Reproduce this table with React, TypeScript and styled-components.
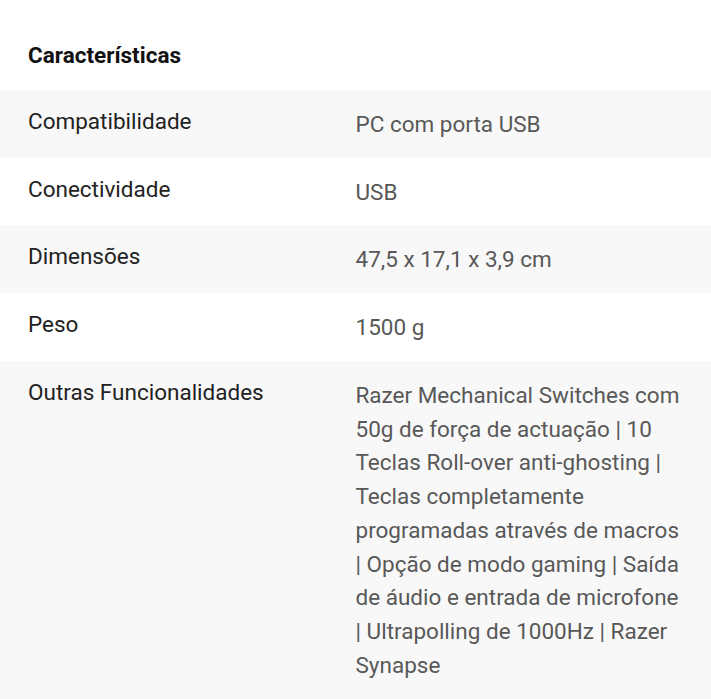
import React from "react";
import styled, { createGlobalStyle } from "styled-components";

const Global = createGlobalStyle`
  html, body { margin: 0; padding: 0; background: #ffffff; }
  body { font-family: Roboto, "Noto Sans", Arial, sans-serif; -webkit-font-smoothing: antialiased; }
`;

const Page = styled.div`
  width: 711px;
  background: #ffffff;
`;

const Title = styled.h2`
  margin: 0;
  padding: 39px 28px 17px;
  font-size: 22.5px;
  line-height: 33.75px;
  font-weight: 700;
  color: #111111;
`;

const Table = styled.div`
  display: flex;
  flex-direction: column;
`;

const Row = styled.div<{ $shaded: boolean }>`
  display: grid;
  grid-template-columns: 1fr 1fr;
  padding: 18px 28px 16px;
  background: ${(p) => (p.$shaded ? "#f8f8f8" : "#ffffff")};
`;

const Label = styled.div`
  font-size: 22.5px;
  line-height: 33.75px;
  color: #222222;
  margin-top: -3px;
`;

const Value = styled.div`
  font-size: 22.5px;
  line-height: 33.75px;
  color: #585858;
`;

const rows: [string, string][] = [
  ["Compatibilidade", "PC com porta USB"],
  ["Conectividade", "USB"],
  ["Dimensões", "47,5 x 17,1 x 3,9 cm"],
  ["Peso", "1500 g"],
  [
    "Outras Funcionalidades",
    "Razer Mechanical Switches com 50g de força de actuação | 10 Teclas Roll-over anti-ghosting | Teclas completamente programadas através de macros | Opção de modo gaming | Saída de áudio e entrada de microfone | Ultrapolling de 1000Hz | Razer Synapse",
  ],
];

export default function App() {
  return (
    <Page>
      <Global />
      <Title>Características</Title>
      <Table>
        {rows.map(([k, v], i) => (
          <Row key={k} $shaded={i % 2 === 0}>
            <Label>{k}</Label>
            <Value>{v}</Value>
          </Row>
        ))}
      </Table>
    </Page>
  );
}
